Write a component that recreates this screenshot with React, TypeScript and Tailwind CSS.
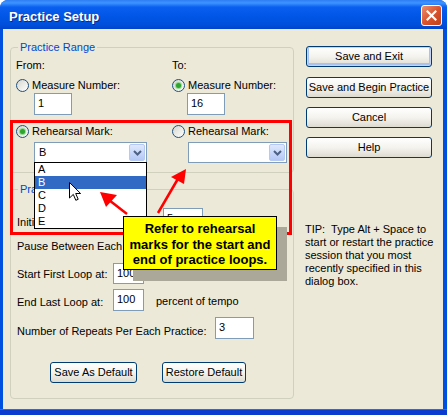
import React from "react";

function Radio({ checked }: { checked?: boolean }) {
  return (
    <span className="flex h-[13px] w-[13px] shrink-0 items-center justify-center rounded-full border border-[#1c5180] bg-gradient-to-br from-[#d6d6cf] to-white">
      {checked && (
        <span className="h-[5px] w-[5px] rounded-full bg-[#2ea52e] shadow-[0_0_1px_1px_#8ad887]" />
      )}
    </span>
  );
}

function TextBox({ value, className }: { value: string; className: string }) {
  return (
    <div className={`shrink-0 border border-[#7f9db9] bg-white px-[3px] pt-[3px] leading-[13px] ${className}`}>
      {value}
    </div>
  );
}

function Combo({ value, className }: { value: string; className: string }) {
  return (
    <div className={`flex h-[21px] shrink-0 items-center border border-[#7f9db9] bg-white pl-[4px] ${className}`}>
      <span className="flex-1 leading-[13px]">{value}</span>
      <span className="mr-[1px] flex h-[17px] w-[16px] items-center justify-center rounded-[2px] border border-[#b6c9f3] bg-gradient-to-b from-[#dfe9fd] to-[#b3c8f5]">
        <svg width="9" height="6" viewBox="0 0 9 6">
          <path d="M1 1 L4.5 4.5 L8 1" fill="none" stroke="#4d6185" strokeWidth="2" />
        </svg>
      </span>
    </div>
  );
}

function XPButton({ children, className }: { children: React.ReactNode; className: string }) {
  return (
    <button
      className={`h-[21px] shrink-0 rounded-[3px] border border-[#003c74] bg-gradient-to-b from-white via-[#f4f3ee] to-[#dedbd0] text-[11px] leading-[13px] text-black ${className}`}
    >
      {children}
    </button>
  );
}

function RangeColumn({
  label,
  measure,
  measureChecked,
  markChecked,
  mark,
  inputOffset,
  comboOffset,
  comboWidth,
}: {
  label: string;
  measure: string;
  measureChecked: boolean;
  markChecked: boolean;
  mark: string;
  inputOffset: string;
  comboOffset: string;
  comboWidth: string;
}) {
  return (
    <div className="flex flex-col items-start">
      <div className="mt-[5px] leading-[13px]">{label}</div>
      <div className="mt-[7px] flex items-center gap-[3px] leading-[13px]">
        <Radio checked={measureChecked} />
        <span>Measure Number:</span>
      </div>
      <TextBox value={measure} className={`mt-[1px] h-[22px] w-[38px] ${inputOffset}`} />
      <div className="mt-[10px] flex items-center gap-[3px] leading-[13px]">
        <Radio checked={markChecked} />
        <span>Rehearsal Mark:</span>
      </div>
      <Combo value={mark} className={`mt-[4px] ${comboOffset} ${comboWidth}`} />
    </div>
  );
}

export default function App() {
  const marks = ["A", "B", "C", "D", "E"];

  return (
    <div className="relative h-[415px] w-[447px] bg-white font-['Liberation_Sans',Arial,sans-serif] text-[11px] text-black">
      <div className="flex h-full flex-col overflow-hidden rounded-t-[8px] bg-[#0050e0]">
        {/* Title bar */}
        <div className="flex h-[29px] shrink-0 items-center justify-between bg-[linear-gradient(to_bottom,#2f7df2_0%,#3d95ff_10%,#0a5ef0_25%,#0055e5_60%,#004fdc_85%,#0044c9_100%)] pl-[9px] pr-[5px]">
          <span className="mt-[4px] text-[13px] font-bold leading-[15px] text-white [text-shadow:1px_1px_0_#0a2a8a]">
            Practice Setup
          </span>
          <div className="mt-[2px] flex h-[21px] w-[21px] items-center justify-center rounded-[3px] border border-white bg-gradient-to-br from-[#e9906f] via-[#d9532e] to-[#c1401a]">
            <svg width="11" height="11" viewBox="0 0 11 11">
              <path d="M1.5 1.5 L9.5 9.5 M9.5 1.5 L1.5 9.5" stroke="white" strokeWidth="2.2" strokeLinecap="square" />
            </svg>
          </div>
        </div>

        {/* Body */}
        <div className="ml-[3px] mr-[4px] flex h-[380px] shrink-0 bg-[#ece9d8]">
          {/* Left column */}
          <div className="flex w-[291px] flex-col pl-[7px] pt-[12px]">
            <fieldset className="w-[284px] rounded-[4px] border border-[#d0d0bf] pb-[9px]">
              <legend className="ml-[7px] px-[2px] leading-[13px] text-[#0046d5]">Practice Range</legend>
              <div className="grid grid-cols-[156px_1fr] pl-[5px]">
                <RangeColumn
                  label="From:"
                  measure="1"
                  measureChecked={false}
                  markChecked={true}
                  mark="B"
                  inputOffset="ml-[18px]"
                  comboOffset="ml-[18px]"
                  comboWidth="w-[113px]"
                />
                <RangeColumn
                  label="To:"
                  measure="16"
                  measureChecked={true}
                  markChecked={false}
                  mark=""
                  inputOffset="ml-[15px]"
                  comboOffset="ml-[16px]"
                  comboWidth="w-[99px]"
                />
              </div>
            </fieldset>

            <fieldset className="mt-[10px] w-[284px] rounded-[4px] border border-[#d0d0bf] pb-[15px]">
              <legend className="ml-[7px] px-[2px] leading-[13px] text-[#0046d5]">Practice Loops</legend>
              <div className="flex flex-col pl-[6px] leading-[13px]">
                <div className="mt-[12px] flex items-start">
                  <span className="mt-[8px] w-[146px]">Initial Delay:</span>
                  <TextBox value="5" className="h-[21px] w-[40px]" />
                  <span className="ml-[8px] mt-[6px]">seconds</span>
                </div>
                <div className="mt-[7px] flex items-start">
                  <span className="mt-[4px] w-[146px]">Pause Between Each Loop:</span>
                  <TextBox value="2" className="h-[21px] w-[40px]" />
                  <span className="ml-[8px] mt-[5px]">seconds</span>
                </div>
                <div className="mt-[6px] flex items-start">
                  <span className="mt-[5px] w-[96px]">Start First Loop at:</span>
                  <TextBox value="100" className="h-[21px] w-[31px]" />
                  <span className="ml-[12px] mt-[5px]">percent of tempo</span>
                </div>
                <div className="mt-[5px] flex items-start">
                  <span className="mt-[7px] w-[96px]">End Last Loop at:</span>
                  <TextBox value="100" className="h-[22px] w-[31px]" />
                  <span className="ml-[12px] mt-[6px]">percent of tempo</span>
                </div>
                <div className="mt-[6px] flex items-start">
                  <span className="mt-[8px] w-[198px]">Number of Repeats Per Each Practice:</span>
                  <TextBox value="3" className="h-[22px] w-[39px]" />
                </div>
                <div className="mt-[23px] flex">
                  <XPButton className="ml-[33px] w-[87px]">Save As Default</XPButton>
                  <XPButton className="ml-[25px] w-[84px]">Restore Default</XPButton>
                </div>
              </div>
            </fieldset>
          </div>

          {/* Right column */}
          <div className="ml-[12px] flex w-[126px] flex-col pt-[17px]">
            <XPButton className="w-[126px] shadow-[inset_0_0_0_1px_#c3d4f7,inset_0_-1px_0_2px_#a9c2f0]">Save and Exit</XPButton>
            <XPButton className="mt-[10px] w-[126px]">Save and Begin Practice</XPButton>
            <XPButton className="mt-[9px] w-[126px]">Cancel</XPButton>
            <XPButton className="mt-[9px] w-[126px]">Help</XPButton>
            <p className="-ml-[1px] mt-[65px] whitespace-pre leading-[13px]">
              {"TIP:  Type Alt + Space to\nstart or restart the practice\nsession that you most\nrecently specified in this\ndialog box."}
            </p>
          </div>
        </div>
        <div className="h-[6px] shrink-0 border-t border-[#1f6ef0] bg-[#0a3ccf]" />
      </div>

      {/* Annotation: red frame */}
      <div className="absolute left-[10px] top-[120px] h-[115px] w-[282px] border-[3px] border-[#ff0000]" />

      {/* Open dropdown list */}
      <div className="absolute left-[34px] top-[162px] w-[113px] border border-black bg-white leading-[13px]">
        {marks.map((m) => (
          <div
            key={m}
            className={m === "B" ? "h-[13px] bg-[#316ac5] pl-[3px] text-white" : "h-[13px] pl-[3px]"}
          >
            {m}
          </div>
        ))}
      </div>

      {/* Annotation arrows */}
      <svg className="pointer-events-none absolute left-0 top-0" width="447" height="415">
        <line x1="127" y1="214" x2="109" y2="200" stroke="#ff0000" strokeWidth="2.5" />
        <polygon points="100,192 117,195 106,207" fill="#ff0000" />
        <line x1="158" y1="213" x2="179" y2="177" stroke="#ff0000" strokeWidth="2.5" />
        <polygon points="186,169 171,177 184,184" fill="#ff0000" />
      </svg>

      {/* Mouse pointer */}
      <svg className="pointer-events-none absolute left-[69px] top-[182px]" width="13" height="21" viewBox="0 0 13 21">
        <path
          d="M0.5 0.5 L0.5 16 L4.3 12.4 L6.8 18.3 L9.2 17.3 L6.7 11.5 L11.6 11.5 Z"
          fill="white"
          stroke="black"
          strokeWidth="1"
          strokeLinejoin="miter"
        />
      </svg>

      {/* Callout */}
      <div className="absolute left-[123px] top-[216px] h-[54px] w-[154px] border border-black bg-[#ffff00] pt-[4px] text-center text-[13px] font-bold leading-[15.5px] shadow-[10px_11px_0_#aca899]">
        Refer to rehearsal
        <br />
        marks for the start and
        <br />
        end of practice loops.
      </div>
    </div>
  );
}
